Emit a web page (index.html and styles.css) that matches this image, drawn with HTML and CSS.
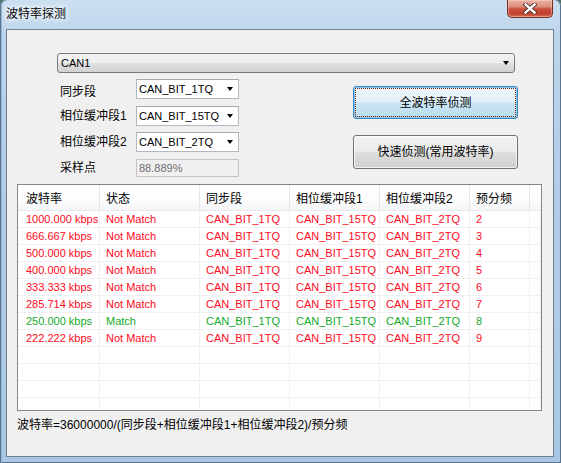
FILE: index.html
```html
<!DOCTYPE html>
<html>
<head>
<meta charset="utf-8">
<link rel="stylesheet" href="styles.css">
</head>
<body>
<div class="window">
  <div class="titlebar">
    <div class="title">波特率探测</div>
    <div class="close">
      <svg width="14" height="11" viewBox="0 0 14 11">
        <path d="M2.5 1.5 L11.5 9.5 M11.5 1.5 L2.5 9.5" stroke="#4b2a26" stroke-width="4.2" stroke-linecap="square" fill="none"/>
        <path d="M2.5 1.5 L11.5 9.5 M11.5 1.5 L2.5 9.5" stroke="#ffffff" stroke-width="2.4" stroke-linecap="square" fill="none"/>
      </svg>
    </div>
  </div>
  <div class="client">
    <div class="combo big"><span class="lt">CAN1</span><i class="arrow"></i></div>
    <div class="form">
      <div class="fields">
        <label class="first">同步段</label>
        <div class="combo small"><span class="lt">CAN_BIT_1TQ</span><i class="arrow"></i></div>
        <label>相位缓冲段1</label>
        <div class="combo small"><span class="lt">CAN_BIT_15TQ</span><i class="arrow"></i></div>
        <label>相位缓冲段2</label>
        <div class="combo small"><span class="lt">CAN_BIT_2TQ</span><i class="arrow"></i></div>
        <label>采样点</label>
        <div class="textbox"><span class="lt">88.889%</span></div>
      </div>
      <div class="buttons">
        <div class="btn primary">全波特率侦测</div>
        <div class="btn second">快速侦测(常用波特率)</div>
      </div>
    </div>
    <div class="list">
      <table>
        <colgroup>
          <col class="c1"><col class="c2"><col class="c3"><col class="c4"><col class="c5"><col class="c6"><col>
        </colgroup>
        <thead>
          <tr><th class="f">波特率</th><th>状态</th><th>同步段</th><th>相位缓冲段1</th><th>相位缓冲段2</th><th>预分频</th><th class="last"></th></tr>
        </thead>
        <tbody>
          <tr class="bad"><td class="f">1000.000 kbps</td><td>Not Match</td><td>CAN_BIT_1TQ</td><td>CAN_BIT_15TQ</td><td>CAN_BIT_2TQ</td><td>2</td><td></td></tr>
          <tr class="bad"><td class="f">666.667 kbps</td><td>Not Match</td><td>CAN_BIT_1TQ</td><td>CAN_BIT_15TQ</td><td>CAN_BIT_2TQ</td><td>3</td><td></td></tr>
          <tr class="bad"><td class="f">500.000 kbps</td><td>Not Match</td><td>CAN_BIT_1TQ</td><td>CAN_BIT_15TQ</td><td>CAN_BIT_2TQ</td><td>4</td><td></td></tr>
          <tr class="bad"><td class="f">400.000 kbps</td><td>Not Match</td><td>CAN_BIT_1TQ</td><td>CAN_BIT_15TQ</td><td>CAN_BIT_2TQ</td><td>5</td><td></td></tr>
          <tr class="bad"><td class="f">333.333 kbps</td><td>Not Match</td><td>CAN_BIT_1TQ</td><td>CAN_BIT_15TQ</td><td>CAN_BIT_2TQ</td><td>6</td><td></td></tr>
          <tr class="bad"><td class="f">285.714 kbps</td><td>Not Match</td><td>CAN_BIT_1TQ</td><td>CAN_BIT_15TQ</td><td>CAN_BIT_2TQ</td><td>7</td><td></td></tr>
          <tr class="ok"><td class="f">250.000 kbps</td><td>Match</td><td>CAN_BIT_1TQ</td><td>CAN_BIT_15TQ</td><td>CAN_BIT_2TQ</td><td>8</td><td></td></tr>
          <tr class="bad"><td class="f">222.222 kbps</td><td>Not Match</td><td>CAN_BIT_1TQ</td><td>CAN_BIT_15TQ</td><td>CAN_BIT_2TQ</td><td>9</td><td></td></tr>
          <tr><td class="f"></td><td></td><td></td><td></td><td></td><td></td><td></td></tr>
          <tr><td class="f"></td><td></td><td></td><td></td><td></td><td></td><td></td></tr>
          <tr><td class="f"></td><td></td><td></td><td></td><td></td><td></td><td></td></tr>
          <tr><td class="f"></td><td></td><td></td><td></td><td></td><td></td><td></td></tr>
        </tbody>
      </table>
    </div>
    <div class="formula">波特率=36000000/(同步段+相位缓冲段1+相位缓冲段2)/预分频</div>
  </div>
</div>
</body>
</html>
```

FILE: styles.css
```css
html, body {
  margin: 0;
  padding: 0;
}
body {
  width: 561px;
  height: 463px;
  overflow: hidden;
  background: #4d6f63;
  font-family: "Liberation Sans", "Noto Sans CJK SC", sans-serif;
  font-size: 12px;
  color: #000;
}
.window {
  width: 561px;
  height: 463px;
  box-sizing: border-box;
  display: flex;
  flex-direction: column;
  background: linear-gradient(180deg, #cde0f2 0%, #bcd5ec 8%, #b2cde8 40%, #a9c7e4 100%);
  box-shadow: inset 1px 0 0 #58748f, inset 2px 0 0 #98b6d2, inset -1px 0 0 #58748f, inset 0 -1px 0 #58748f;
  border-radius: 6px 6px 0 0;
}
.titlebar {
  height: 29px;
  flex: none;
  display: flex;
  align-items: flex-start;
}
.title {
  padding: 7px 0 0 6px;
  line-height: 14px;
  font-size: 12px;
  text-shadow: 0 0 4px #fff, 0 0 6px #fff, 0 0 8px #e8f2fb;
}
.close {
  margin-left: auto;
  margin-right: 8px;
  width: 46px;
  height: 18px;
  box-sizing: border-box;
  border: 1px solid #7a2c22;
  border-top: none;
  border-radius: 0 0 5px 5px;
  background: linear-gradient(180deg, #eab2a4 0%, #dc8c7b 40%, #c9503f 52%, #c2412f 80%, #d4684c 100%);
  box-shadow: inset 0 0 0 1px rgba(255, 220, 210, 0.45);
  display: flex;
  align-items: center;
  justify-content: center;
}
.client {
  flex: 1;
  margin: 0 7px 6px 6px;
  border: 1px solid #6f7f90;
  background: #f0f0f0;
  display: flex;
  flex-direction: column;
  min-height: 0;
}
.lt {
  font-size: 11px;
}
.combo {
  box-sizing: border-box;
  height: 20px;
  display: flex;
  align-items: center;
  line-height: 14px;
}
.combo.big {
  margin: 23px 0 0 50px;
  width: 458px;
  border: 1px solid #7a7a7a;
  border-radius: 3px;
  padding-left: 3px;
  background: linear-gradient(180deg, #f3f3f3 0%, #ececec 48%, #dfdfdf 52%, #d2d2d2 100%);
}
.arrow {
  margin-left: auto;
  margin-right: 5px;
  width: 0;
  height: 0;
  border-left: 3.5px solid transparent;
  border-right: 3.5px solid transparent;
  border-top: 4px solid #000;
}
.form {
  height: 98px;
  margin-top: 6px;
  display: flex;
  flex: none;
}
.fields {
  margin-left: 53px;
  display: grid;
  grid-template-columns: 76px 103px;
  grid-template-rows: 20px 20px 20px 18px;
  row-gap: 6.5px;
  align-content: start;
}
.fields label {
  font-size: 12px;
  line-height: 16px;
  align-self: center;
}
.fields label.first {
  padding-top: 6px;
}
.combo.small {
  width: 103px;
  border: 1px solid #b4b7be;
  border-top-color: #a5a8ae;
  background: #fff;
  padding-left: 2px;
}
.textbox {
  box-sizing: border-box;
  height: 18px;
  width: 103px;
  border: 1px solid #c4c4c4;
  border-radius: 1px;
  background: #f0f0f0;
  color: #6d6d6d;
  padding-left: 2px;
  line-height: 16px;
}
.buttons {
  margin-left: 114px;
  margin-top: 7px;
  display: flex;
  flex-direction: column;
  gap: 16px;
}
.btn {
  width: 165px;
  box-sizing: border-box;
  border: 1px solid #707070;
  border-radius: 3px;
  background: linear-gradient(180deg, #f2f2f2 0%, #ebebeb 48%, #dddddd 52%, #cfcfcf 100%);
  box-shadow: inset 0 0 0 1px rgba(255, 255, 255, 0.7);
  display: flex;
  align-items: center;
  justify-content: center;
  font-size: 12px;
  line-height: 16px;
  position: relative;
}
.btn.primary {
  height: 33px;
  border-color: #3a87c8;
  background: linear-gradient(180deg, #eef6fb 0%, #e2f0f9 48%, #cae5f5 52%, #b9dcf0 100%);
  box-shadow: inset 0 0 0 1px #8fc6ec;
}
.btn.primary::after {
  content: "";
  position: absolute;
  left: 1px;
  top: 1px;
  right: 1px;
  bottom: 1px;
  border: 1px dotted #6a2a10;
}
.btn.second {
  height: 34px;
}
.list {
  margin: 7px 0 0 10px;
  width: 525px;
  height: 227px;
  box-sizing: border-box;
  border: 1px solid #828790;
  background: #fff;
  overflow: hidden;
  flex: none;
}
.list table {
  width: 523px;
  table-layout: fixed;
  border-collapse: separate;
  border-spacing: 0;
}
.c1 { width: 82px; }
.c2 { width: 100px; }
.c3 { width: 90px; }
.c4 { width: 90px; }
.c5 { width: 90px; }
.c6 { width: 60px; }
.list th {
  height: 23px;
  padding: 2px 0 0 6px;
  text-align: left;
  font-weight: normal;
  font-size: 12px;
  line-height: 16px;
  white-space: nowrap;
  overflow: hidden;
  background: linear-gradient(180deg, #ffffff 0%, #ffffff 45%, #f4f5f7 100%);
  border-right: 1px solid #e3e6ea;
  border-bottom: 1px solid #e8e9eb;
}
.list th.f,
.list td.f {
  padding-left: 8px;
}
.list th.last {
  border-right: none;
}
.list td {
  height: 15px;
  padding: 1px 0 0 6px;
  font-size: 11px;
  line-height: 15px;
  white-space: nowrap;
  overflow: hidden;
  border-right: 1px solid #f0f0f0;
  border-bottom: 1px solid #f0f0f0;
}
.list tr.bad td {
  color: #ff0a22;
}
.list tr.ok td {
  color: #12aa2a;
}
.formula {
  margin: 7px 0 0 10px;
  font-size: 12px;
  line-height: 14px;
}
```
